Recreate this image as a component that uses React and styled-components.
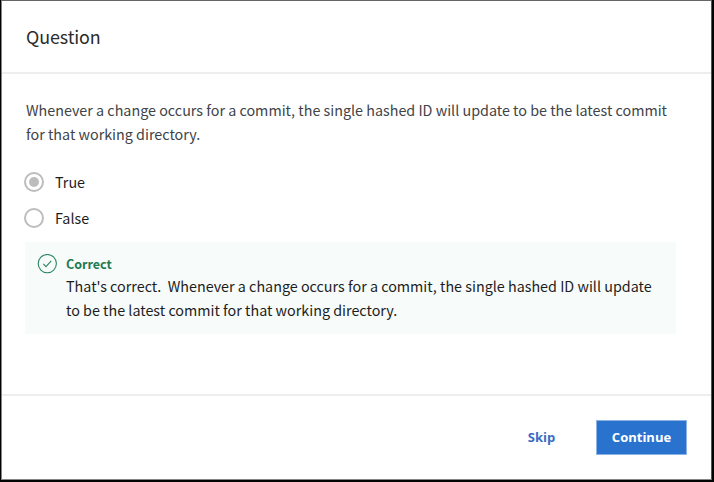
import React from "react";
import styled, { createGlobalStyle } from "styled-components";

const GlobalStyle = createGlobalStyle`
  * { box-sizing: border-box; }
  body { margin: 0; background: #020303; }
`;

const Backdrop = styled.div`
  width: 714px;
  height: 482px;
  padding: 0 2px 2px 1px;
  background: #020303;
  overflow: hidden;
  font-family: "Noto Sans CJK SC", "Noto Sans", sans-serif;
`;

const Dialog = styled.section`
  display: flex;
  flex-direction: column;
  height: 480px;
  background: #fff;
  border: 1px solid #858585;
  border-top-color: #666465;
  border-right-color: #555;
`;

const Header = styled.header`
  height: 73px;
  padding: 20px 24px 0;
  border-bottom: 2px solid #eeeeee;
`;

const Title = styled.h1`
  margin: 0;
  font-size: 17.9px;
  font-weight: 400;
  line-height: 30px;
  letter-spacing: -0.1px;
  color: #2b2b2b;
`;

const Body = styled.main`
  height: 320px;
  padding: 24px 35px 0 22px;
`;

const Line = styled.span`
  display: block;
  width: max-content;
  white-space: pre;
`;

const Prompt = styled.p`
  margin: 0 0 0 2px;
  font-size: 14.33px;
  line-height: 24px;
  color: #404347;
`;

const Options = styled.div`
  display: grid;
  gap: 12px;
  margin-top: 24px;
`;

const Option = styled.label`
  display: flex;
  align-items: center;
  gap: 11px;
  height: 24px;
  font-size: 14.33px;
  line-height: 24px;
  color: #1d1d1d;
`;

const Radio = styled.span`
  display: grid;
  place-items: center;
  width: 20px;
  height: 20px;
  border: 2px solid #bdbdbd;
  border-radius: 50%;

  &::after {
    content: "";
    width: 10px;
    height: 10px;
    border-radius: 50%;
    background: ${({ $checked }) => ($checked ? "#bdbdbd" : "transparent")};
  }
`;

const Feedback = styled.div`
  display: flex;
  gap: 9px;
  width: 651px;
  height: 92px;
  margin: 12px 0 0 1px;
  padding: 12px 12px 0;
  background: #f7fbfa;
`;

const CheckIcon = styled.svg`
  flex: none;
  width: 20px;
  height: 20px;
  fill: none;
  stroke: #2c8660;
`;

const FeedbackTitle = styled.strong`
  display: block;
  font-size: 12.53px;
  font-weight: 700;
  line-height: 20px;
  color: #1d7a53;
`;

const FeedbackText = styled.p`
  margin: 0;
  font-size: 14.33px;
  line-height: 24px;
  color: #1d1d1d;
`;

const Footer = styled.footer`
  display: flex;
  flex: 1;
  justify-content: flex-end;
  align-items: flex-start;
  gap: 24px;
  padding: 24px 24px 0;
  border-top: 2px solid #eeeeee;
`;

const Button = styled.button`
  height: 35px;
  padding: 0 0 1px;
  width: ${({ $primary }) => ($primary ? "91px" : "61px")};
  border: 1px solid ${({ $primary }) => ($primary ? "#8db3e5" : "transparent")};
  background: ${({ $primary }) => ($primary ? "#2973cf" : "transparent")};
  color: ${({ $primary }) => ($primary ? "#fff" : "#386dc4")};
  font: 700 13px/30px "Open Sans", sans-serif;
`;

export default function App() {
  return (
    <>
      <GlobalStyle />
      <Backdrop>
        <Dialog>
          <Header>
            <Title>Question</Title>
          </Header>
          <Body>
            <Prompt>
              <Line>Whenever a change occurs for a commit, the single hashed ID will update to be the latest commit</Line>
              <Line>for that working directory.</Line>
            </Prompt>
            <Options>
              <Option><Radio $checked />True</Option>
              <Option><Radio />False</Option>
            </Options>
            <Feedback>
              <CheckIcon viewBox="0 0 20 20">
                <circle cx="10.3" cy="9.6" r="9.1" strokeWidth="1.1" />
                <path d="M6.3 9.8l2.7 2.8L14.2 6.9" strokeWidth="1.1" />
              </CheckIcon>
              <div>
                <FeedbackTitle>Correct</FeedbackTitle>
                <FeedbackText>
                  <Line>{"That's correct.  Whenever a change occurs for a commit, the single hashed ID will update"}</Line>
                  <Line>to be the latest commit for that working directory.</Line>
                </FeedbackText>
              </div>
            </Feedback>
          </Body>
          <Footer>
            <Button>Skip</Button>
            <Button $primary>Continue</Button>
          </Footer>
        </Dialog>
      </Backdrop>
    </>
  );
}
